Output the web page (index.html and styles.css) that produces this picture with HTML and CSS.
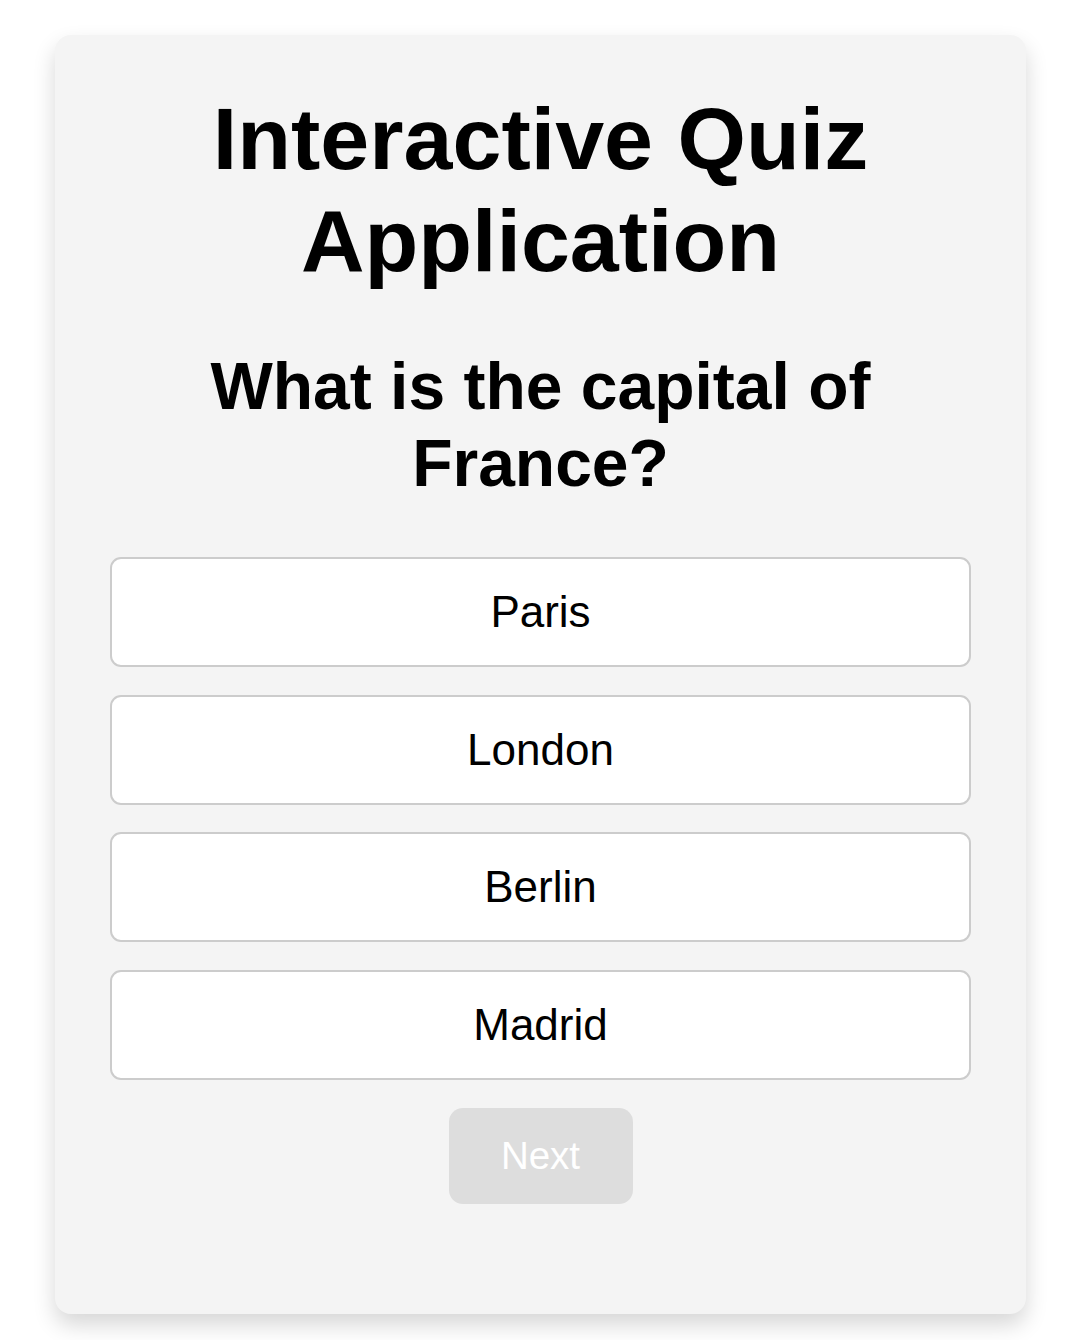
FILE: index.html
```html
<!DOCTYPE html>
<html lang="en">
<head>
<meta charset="utf-8">
<title>Interactive Quiz Application</title>
<link rel="stylesheet" href="styles.css">
</head>
<body>
<main class="quiz-card">
  <h1 class="quiz-title">Interactive Quiz Application</h1>
  <h2 class="quiz-question">What is the capital of France?</h2>
  <div class="options">
    <button class="option">Paris</button>
    <button class="option">London</button>
    <button class="option">Berlin</button>
    <button class="option">Madrid</button>
  </div>
  <div class="actions">
    <button class="next-btn" disabled>Next</button>
  </div>
</main>
</body>
</html>
```

FILE: styles.css
```css
* { box-sizing: border-box; }

html, body {
  margin: 0;
  background: #ffffff;
}

body {
  padding: 35px 55px 26px;
  font-family: "Liberation Sans", Arial, sans-serif;
  color: #000;
}

.quiz-card {
  background: #f4f4f4;
  border-radius: 16px;
  padding: 53px 55px 110px;
  box-shadow: 0 11px 22px rgba(0, 0, 0, 0.16);
  text-align: center;
}

.quiz-title {
  margin: 0;
  font-size: 88px;
  font-weight: bold;
  line-height: normal;
}

.quiz-question {
  margin: 56px 0 55px;
  font-size: 66px;
  font-weight: bold;
  line-height: 77px;
}

.options {
  display: flex;
  flex-direction: column;
  gap: 27.5px;
}

.option {
  display: block;
  width: 100%;
  height: 110px;
  background: #ffffff;
  border: 2px solid #cccccc;
  border-radius: 11px;
  font-family: "Liberation Sans", Arial, sans-serif;
  font-size: 44px;
  color: #000;
  padding: 0;
  cursor: pointer;
}

.actions {
  display: flex;
  justify-content: center;
  margin-top: 28px;
}

.next-btn {
  width: 184px;
  height: 96px;
  background: #dddddd;
  border: none;
  border-radius: 14px;
  color: #ffffff;
  font-family: "Liberation Sans", Arial, sans-serif;
  font-size: 38.5px;
  padding: 0;
}
```
